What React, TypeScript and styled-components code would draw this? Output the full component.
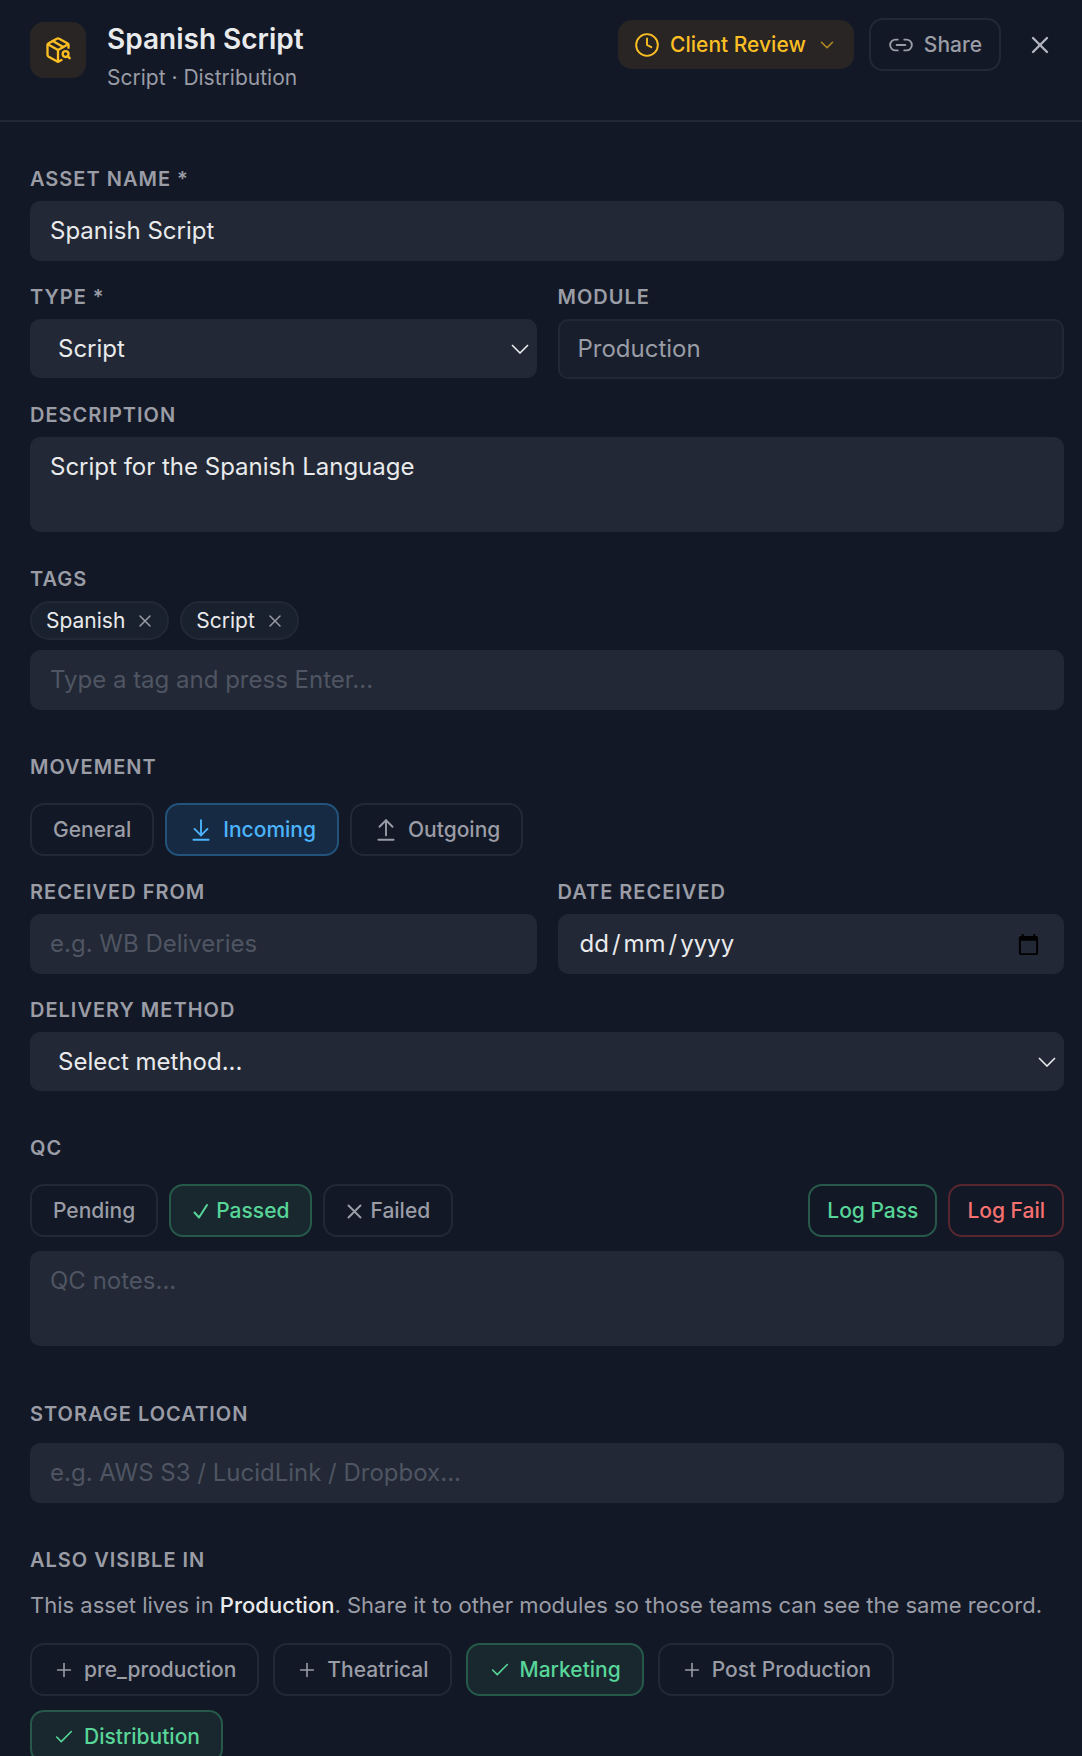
import React, { useState } from "react";
import styled, { createGlobalStyle, css } from "styled-components";
import {
  ArrowDownToLine,
  ArrowUpFromLine,
  Check,
  ChevronDown,
  Clock,
  Link2,
  PackageSearch,
  Plus,
  X,
} from "lucide-react";

const color = {
  bg: "#121825",
  field: "#222835",
  subtle: "#181e2b",
  chip: "#1a212e",
  line: "#222835",
  text: "#e9eaec",
  muted: "#9a9ca6",
  faint: "#4f5562",
  amber: "#fbbf24",
  amberBg: "#292524",
  blue: "#4bb4fb",
  blueBg: "#172a43",
  blueLine: "#23527a",
  green: "#58d598",
  greenBg: "#19282f",
  greenLine: "#26594a",
  red: "#f87171",
  redLine: "#57262f",
};

const GlobalStyle = createGlobalStyle`
  *, *::before, *::after { box-sizing: border-box; }
  body {
    margin: 0;
    background: ${color.bg};
    color: ${color.text};
    font-family: Inter, "Liberation Sans", sans-serif;
  }
  button, input, select, textarea { font-family: inherit; margin: 0; }
  button { cursor: pointer; }
`;

const Drawer = styled.main`
  display: flex;
  flex-direction: column;
  height: 100vh;
  background: ${color.bg};
`;

const Header = styled.header`
  display: flex;
  align-items: flex-start;
  justify-content: space-between;
  flex: none;
  padding: 18px 18px 30px 30px;
  border-bottom: 2px solid ${color.line};
`;

const Identity = styled.div`
  display: flex;
  align-items: flex-start;
  gap: 21px;
  padding-top: 4px;
`;

const AssetIcon = styled.div`
  display: grid;
  place-items: center;
  width: 56px;
  height: 56px;
  border-radius: 14px;
  background: ${color.amberBg};
  color: ${color.amber};
`;

const Title = styled.h1`
  margin: 0;
  font-size: 28px;
  line-height: 34px;
  font-weight: 600;
`;

const Subtitle = styled.p`
  margin: 10px 0 0;
  font-size: 21px;
  line-height: 24px;
  color: ${color.muted};
`;

const Actions = styled.div`
  display: flex;
  align-items: center;
  gap: 15px;
`;

const headerButton = css`
  display: inline-flex;
  align-items: center;
  gap: 10px;
  border-radius: 14px;
  font-size: 21px;
  line-height: 25px;
  font-weight: 500;
`;

const StatusButton = styled.button`
  ${headerButton}
  height: 49px;
  padding: 0 16px;
  border: 0;
  background: ${color.amberBg};
  color: ${color.amber};
`;

const ShareButton = styled.button`
  ${headerButton}
  height: 53px;
  padding: 0 17px;
  border: 2px solid ${color.line};
  background: transparent;
  color: ${color.muted};
`;

const CloseButton = styled.button`
  display: grid;
  place-items: center;
  padding: 10px;
  border: 0;
  background: transparent;
  color: #b4b7bf;
`;

const Body = styled.form`
  display: flex;
  flex-direction: column;
  gap: 45px;
  flex: 1;
  min-height: 0;
  overflow-y: auto;
  scrollbar-width: none;
  padding: 45px 18px 45px 30px;
`;

const Section = styled.section`
  display: flex;
  flex-direction: column;
  flex: none;
`;

const Stack = styled.div`
  display: flex;
  flex-direction: column;
  gap: 24px;
`;

const Columns = styled.div`
  display: grid;
  grid-template-columns: 1fr 1fr;
  gap: 21px;
`;

const Field = styled.div<{ $trail?: boolean }>`
  display: flex;
  flex-direction: column;
  gap: 10px;
  min-width: 0;
  padding-bottom: ${(p) => (p.$trail ? 11 : 0)}px;
`;

const caption = css`
  margin: 0;
  font-size: 20px;
  line-height: 24px;
  font-weight: 600;
  letter-spacing: 1px;
  text-transform: uppercase;
  color: ${color.muted};
`;

const Label = styled.label`
  ${caption}
`;

const SectionTitle = styled.h2<{ $gap: number }>`
  ${caption}
  margin-bottom: ${(p) => p.$gap}px;
`;

const control = css`
  width: 100%;
  border: 2px solid ${color.field};
  border-radius: 10px;
  background: ${color.field};
  color: ${color.text};
  font-size: 24px;
  line-height: 30px;
  outline: 0;
  &::placeholder {
    color: ${color.faint};
    opacity: 1;
  }
`;

const TextInput = styled.input`
  ${control}
  height: 60px;
  padding: 0 18px 1px;
  &[readonly] {
    border-color: ${color.line};
    background: ${color.subtle};
    color: ${color.muted};
  }
`;

const TextArea = styled.textarea`
  ${control}
  display: block;
  height: 95px;
  padding: 13px 18px;
  resize: none;
`;

const Overlay = styled.div`
  display: grid;
  align-items: center;
  & > * {
    grid-area: 1 / 1;
  }
`;

const Select = styled.select`
  ${control}
  appearance: none;
  height: 59px;
  padding: 0 40px 0 26px;
`;

const SelectArrow = styled.svg`
  justify-self: end;
  margin-right: 8px;
  pointer-events: none;
`;

const DateBox = styled.div`
  ${control}
  display: flex;
  align-items: center;
  height: 60px;
  padding: 0 22px 0 17px;
`;

const DatePart = styled.input`
  field-sizing: content;
  padding: 0 3px;
  border: 0;
  outline: 0;
  background: transparent;
  color: inherit;
  font-size: inherit;
  line-height: inherit;
  &::placeholder {
    color: inherit;
    opacity: 1;
  }
`;

const CalendarButton = styled.button`
  display: grid;
  margin-left: auto;
  padding: 0;
  border: 0;
  background: transparent;
  color: #000;
`;

const ButtonRow = styled.div<{ $gap?: number }>`
  display: flex;
  flex-wrap: wrap;
  gap: ${(p) => p.$gap ?? 11}px;
`;

const SplitRow = styled.div`
  display: flex;
  justify-content: space-between;
  margin-bottom: 14px;
`;

const Chip = styled.span`
  display: inline-flex;
  align-items: center;
  gap: 10px;
  height: 39px;
  padding: 0 12px 0 14px;
  border: 2px solid ${color.line};
  border-radius: 20px;
  background: ${color.chip};
  font-size: 21px;
  line-height: 24px;
`;

const ChipRemove = styled.button`
  display: grid;
  padding: 0;
  border: 0;
  background: transparent;
  color: ${color.muted};
`;

type Tone = "blue" | "green" | "plain";

const tones = {
  plain: css`
    border-color: ${color.line};
    background: transparent;
    color: ${color.muted};
  `,
  blue: css`
    border-color: ${color.blueLine};
    background: ${color.blueBg};
    color: ${color.blue};
  `,
  green: css`
    border-color: ${color.greenLine};
    background: ${color.greenBg};
    color: ${color.green};
  `,
};

const pill = css`
  display: inline-flex;
  align-items: center;
  height: 53px;
  border: 2px solid;
  border-radius: 14px;
  font-size: 21px;
  line-height: 25px;
  font-weight: 500;
`;

const Toggle = styled.button<{ $tone: Tone; $tight?: boolean }>`
  ${pill}
  gap: ${(p) => (p.$tight ? 8 : 9)}px;
  padding: 0 21px;
  ${(p) => tones[p.$tone]}
`;

const LogButton = styled.button<{ $fail?: boolean }>`
  ${pill}
  padding: 0 17px;
  background: transparent;
  color: ${(p) => (p.$fail ? color.red : color.green)};
  border-color: ${(p) => (p.$fail ? color.redLine : color.greenLine)};
`;

const Note = styled.p`
  margin: 0 0 21px;
  font-size: 22px;
  line-height: 34px;
  color: ${color.muted};
  strong {
    font-weight: 500;
    color: ${color.text};
  }
`;

const Arrow = () => (
  <SelectArrow width="18" height="10" viewBox="0 0 18 10" fill="none" stroke={color.text} strokeWidth="1.6" aria-hidden="true">
    <path d="M1 1l8 8 8-8" />
  </SelectArrow>
);

const resultMarks: Record<string, string> = {
  Passed: "M2.500 9.500l4.500 5L15 2",
  Failed: "M2.500 2.500l12 12M14.500 2.500l-12 12",
};

const ResultMark = ({ d }: { d: string }) => (
  <svg width="16" height="16" viewBox="0 0 16 16" fill="none" stroke="currentColor" strokeWidth="2" strokeLinecap="round" strokeLinejoin="round" aria-hidden="true">
    <path d={d} />
  </svg>
);

const modules = ["pre_production", "Theatrical", "Marketing", "Post Production", "Distribution"];

export default function App() {
  const [name, setName] = useState("Spanish Script");
  const [description, setDescription] = useState("Script for the Spanish Language");
  const [tags, setTags] = useState(["Spanish", "Script"]);
  const [movement, setMovement] = useState("Incoming");
  const [qc, setQc] = useState("Passed");
  const [shared, setShared] = useState(["Marketing", "Distribution"]);

  const toggleModule = (m: string) =>
    setShared((s) => (s.includes(m) ? s.filter((x) => x !== m) : [...s, m]));

  return (
    <Drawer>
      <GlobalStyle />
      <Header>
        <Identity>
          <AssetIcon>
            <PackageSearch size={28} strokeWidth={2} />
          </AssetIcon>
          <div>
            <Title>Spanish Script</Title>
            <Subtitle>Script · Distribution</Subtitle>
          </div>
        </Identity>
        <Actions>
          <StatusButton type="button">
            <Clock size={26} strokeWidth={1.75} />
            Client Review
            <ChevronDown size={22} strokeWidth={1.75} opacity={0.65} />
          </StatusButton>
          <ShareButton type="button">
            <Link2 size={26} strokeWidth={1.75} />
            Share
          </ShareButton>
          <CloseButton type="button" aria-label="Close">
            <X size={28} strokeWidth={2} />
          </CloseButton>
        </Actions>
      </Header>

      <Body onSubmit={(e) => e.preventDefault()}>
        <Section>
          <Stack>
            <Field>
              <Label htmlFor="name">Asset name *</Label>
              <TextInput id="name" value={name} onChange={(e) => setName(e.target.value)} />
            </Field>
            <Columns>
              <Field>
                <Label htmlFor="type">Type *</Label>
                <Overlay>
                  <Select id="type" defaultValue="Script">
                    <option>Script</option>
                  </Select>
                  <Arrow />
                </Overlay>
              </Field>
              <Field>
                <Label htmlFor="module">Module</Label>
                <TextInput id="module" value="Production" readOnly />
              </Field>
            </Columns>
            <Field $trail>
              <Label htmlFor="description">Description</Label>
              <TextArea id="description" value={description} onChange={(e) => setDescription(e.target.value)} />
            </Field>
            <Field>
              <Label htmlFor="tags">Tags</Label>
              <ButtonRow>
                {tags.map((t) => (
                  <Chip key={t}>
                    {t}
                    <ChipRemove
                      type="button"
                      aria-label={`Remove ${t}`}
                      onClick={() => setTags(tags.filter((x) => x !== t))}
                    >
                      <X size={20} strokeWidth={1.75} />
                    </ChipRemove>
                  </Chip>
                ))}
              </ButtonRow>
              <TextInput id="tags" placeholder="Type a tag and press Enter..." />
            </Field>
          </Stack>
        </Section>

        <Section>
          <SectionTitle $gap={24}>Movement</SectionTitle>
          <Stack>
            <ButtonRow>
              {["General", "Incoming", "Outgoing"].map((m) => (
                <Toggle
                  key={m}
                  type="button"
                  aria-pressed={movement === m}
                  $tone={movement === m ? "blue" : "plain"}
                  onClick={() => setMovement(m)}
                >
                  {m === "Incoming" && <ArrowDownToLine size={26} strokeWidth={1.75} />}
                  {m === "Outgoing" && <ArrowUpFromLine size={26} strokeWidth={1.75} />}
                  {m}
                </Toggle>
              ))}
            </ButtonRow>
            <Columns>
              <Field>
                <Label htmlFor="from">Received from</Label>
                <TextInput id="from" placeholder="e.g. WB Deliveries" />
              </Field>
              <Field>
                <Label htmlFor="day">Date received</Label>
                <DateBox>
                  <DatePart id="day" placeholder="dd" maxLength={2} inputMode="numeric" />
                  /
                  <DatePart aria-label="Month" placeholder="mm" maxLength={2} inputMode="numeric" />
                  /
                  <DatePart aria-label="Year" placeholder="yyyy" maxLength={4} inputMode="numeric" />
                  <CalendarButton type="button" aria-label="Pick a date">
                    <svg width="23" height="23" viewBox="0 0 24 24" fill="currentColor" aria-hidden="true">
                      <path d="M20 3h-1V1h-2v2H7V1H5v2H4c-1.100 0-2 .9-2 2v16c0 1.100.9 2 2 2h16c1.100 0 2-.9 2-2V5c0-1.100-.9-2-2-2zm0 18H4V8h16v13z" />
                    </svg>
                  </CalendarButton>
                </DateBox>
              </Field>
            </Columns>
            <Field>
              <Label htmlFor="method">Delivery method</Label>
              <Overlay>
                <Select id="method" defaultValue="">
                  <option value="">Select method...</option>
                </Select>
                <Arrow />
              </Overlay>
            </Field>
          </Stack>
        </Section>

        <Section>
          <SectionTitle $gap={24}>QC</SectionTitle>
          <SplitRow>
            <ButtonRow>
              {["Pending", "Passed", "Failed"].map((q) => (
                <Toggle
                  key={q}
                  type="button"
                  aria-pressed={qc === q}
                  $tight
                  $tone={qc === q ? "green" : "plain"}
                  onClick={() => setQc(q)}
                >
                  {resultMarks[q] && <ResultMark d={resultMarks[q]} />}
                  {q}
                </Toggle>
              ))}
            </ButtonRow>
            <ButtonRow>
              <LogButton type="button">Log Pass</LogButton>
              <LogButton type="button" $fail>
                Log Fail
              </LogButton>
            </ButtonRow>
          </SplitRow>
          <Field $trail>
            <TextArea aria-label="QC notes" placeholder="QC notes..." />
          </Field>
        </Section>

        <Section>
          <SectionTitle $gap={17} id="storage-title">
            Storage location
          </SectionTitle>
          <TextInput aria-labelledby="storage-title" placeholder="e.g. AWS S3 / LucidLink / Dropbox..." />
        </Section>

        <Section>
          <SectionTitle $gap={16}>Also visible in</SectionTitle>
          <Note>
            This asset lives in <strong>Production</strong>. Share it to other modules so those teams can see the same
            record.
          </Note>
          <ButtonRow $gap={14}>
            {modules.map((m) => {
              const on = shared.includes(m);
              const Icon = on ? Check : Plus;
              return (
                <Toggle
                  key={m}
                  type="button"
                  aria-pressed={on}
                  $tone={on ? "green" : "plain"}
                  onClick={() => toggleModule(m)}
                >
                  <Icon size={22} strokeWidth={1.75} />
                  {m}
                </Toggle>
              );
            })}
          </ButtonRow>
        </Section>
      </Body>
    </Drawer>
  );
}
